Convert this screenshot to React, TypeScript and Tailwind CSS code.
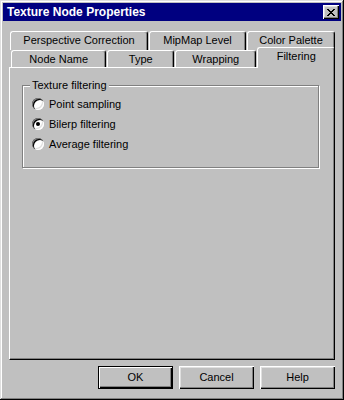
import React from "react";

const backTabs = [
  { label: "Perspective Correction", w: "w-[138px]" },
  { label: "MipMap Level", w: "w-[97px]" },
  { label: "Color Palette", w: "w-[88px]" },
];

const frontTabs = [
  { label: "Node Name", w: "w-[96px]", active: false },
  { label: "Type", w: "w-[67px]", active: false },
  { label: "Wrapping", w: "w-[82px]", active: false },
  { label: "Filtering", w: "w-[78px]", active: true },
];

const options = ["Point sampling", "Bilerp filtering", "Average filtering"];

function Radio({ checked }: { checked: boolean }) {
  return (
    <span className="relative w-[12px] h-[12px] rounded-full bg-white shadow-[inset_1px_1px_#808080,inset_2px_2px_#000,inset_-1px_-1px_#fff,inset_-2px_-2px_#dfdfdf] flex items-center justify-center shrink-0">
      {checked && <span className="w-[4px] h-[4px] rounded-full bg-black" />}
    </span>
  );
}

function Button({ label, isDefault }: { label: string; isDefault?: boolean }) {
  return (
    <button
      className={
        "w-[75px] h-[23px] bg-[#c0c0c0] text-black text-[11px] flex items-center justify-center " +
        (isDefault
          ? "border border-black shadow-[inset_1px_1px_#fff,inset_-1px_-1px_#000,inset_-2px_-2px_#808080]"
          : "shadow-[inset_1px_1px_#fff,inset_-1px_-1px_#000,inset_-2px_-2px_#808080,inset_2px_2px_#dfdfdf]")
      }
    >
      {label}
    </button>
  );
}

export default function App() {
  return (
    <div className="w-[344px] h-[400px] bg-[#c0c0c0] p-[3px] font-['Liberation_Sans',Arial,sans-serif] text-[11px] text-black shadow-[inset_-1px_-1px_#000,inset_1px_1px_#dfdfdf,inset_-2px_-2px_#808080,inset_2px_2px_#fff]">
      {/* title bar */}
      <div className="h-[18px] bg-[#000080] flex items-center justify-between pl-[4px] pr-[2px]">
        <span className="text-white font-bold text-[12px] leading-none">Texture Node Properties</span>
        <span className="w-[16px] h-[14px] bg-[#c0c0c0] flex items-center justify-center shadow-[inset_1px_1px_#fff,inset_-1px_-1px_#000,inset_-2px_-2px_#808080,inset_2px_2px_#dfdfdf]">
          <svg width="8" height="7" viewBox="0 0 8 7" shapeRendering="crispEdges">
            <path d="M0 0h2l2 2.5L6 0h2L5 3.5 8 7H6L4 4.5 2 7H0l3-3.5z" fill="#000" />
          </svg>
        </span>
      </div>

      <div className="px-[6px] pt-[10px]">
        {/* back row of tabs */}
        <div className="flex h-[19px] ml-px gap-px">
          {backTabs.map((t) => (
            <div
              key={t.label}
              className={`${t.w} h-[19px] flex items-center justify-center rounded-t-[3px] border-t border-l border-white border-r border-r-black shadow-[inset_-1px_0_#808080] pb-px`}
            >
              {t.label}
            </div>
          ))}
        </div>

        {/* front row of tabs */}
        <div className="flex items-end h-[17px] ml-[2px]">
          {frontTabs.map((t) => (
            <div
              key={t.label}
              className={
                `${t.w} flex items-center justify-center rounded-t-[3px] border-t border-l border-white border-r border-r-black shadow-[inset_-1px_0_#808080] bg-[#c0c0c0] ` +
                (t.active ? "h-[21px] -mb-px relative z-10 pb-[3px]" : "h-[17px] mr-px")
              }
            >
              {t.label}
            </div>
          ))}
        </div>

        {/* tab panel */}
        <div className="h-[293px] border-t border-l border-white border-r border-b border-r-black border-b-black shadow-[inset_-1px_-1px_#808080] pt-[17px] pl-[12px]">
          <div className="relative w-[297px] h-[83px] border border-[#808080] shadow-[inset_1px_1px_#fff,1px_1px_#fff] pt-[8px] pl-[9px]">
            <span className="absolute -top-[8px] left-[7px] px-[2px] bg-[#c0c0c0] leading-[14px]">Texture filtering</span>
            {options.map((o, i) => (
              <div key={o} className="h-[20px] flex items-center gap-[5px]">
                <Radio checked={i === 1} />
                <span>{o}</span>
              </div>
            ))}
          </div>
        </div>

        {/* buttons */}
        <div className="flex justify-end gap-[6px] mt-[6px]">
          <Button label="OK" isDefault />
          <Button label="Cancel" />
          <Button label="Help" />
        </div>
      </div>
    </div>
  );
}
